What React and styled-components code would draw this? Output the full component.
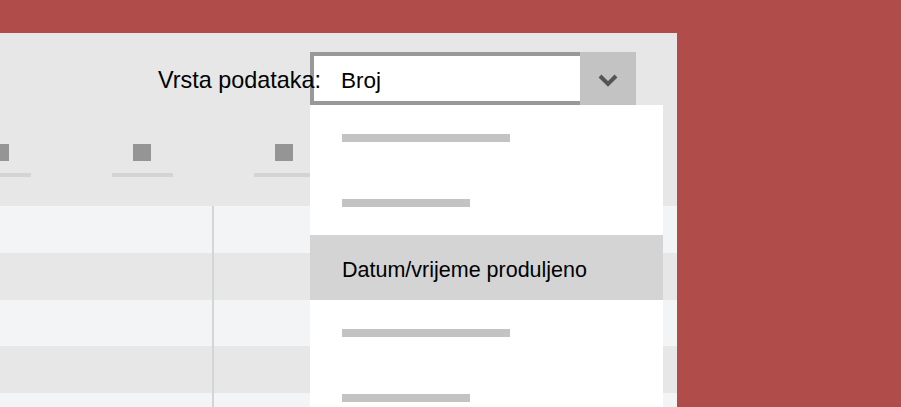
import { createGlobalStyle, styled } from "styled-components";

const GlobalStyle = createGlobalStyle`
  html, body {
    margin: 0;
    padding: 0;
    background: #b04d4b;
    overflow: hidden;
  }
  body {
    font-family: "Liberation Sans", Arial, sans-serif;
    color: #000;
  }
`;

const headerColumns = [0, 1, 2, 3, 4];
const rows = [
  { light: true, h: 47 },
  { light: false, h: 47 },
  { light: true, h: 46 },
  { light: false, h: 47 },
  { light: true, h: 47 },
];
const items = [
  { bar: 168 },
  { bar: 128 },
  { label: "Datum/vrijeme produljeno" },
  { bar: 168 },
  { bar: 128 },
];

const Chevron = () => (
  <svg width="22" height="14" viewBox="0 0 22 14">
    <path
      d="M3 3 L11 11 L19 3"
      fill="none"
      stroke="#555"
      strokeWidth="4"
      strokeLinecap="butt"
      strokeLinejoin="miter"
    />
  </svg>
);

const App = () => {
  return (
    <>
      <GlobalStyle />
      <Frame>
        <Panel>
          <Header>
            <TopRow>
              <Label>Vrsta podataka:</Label>
              <Combo>
                <ComboValue>Broj</ComboValue>
                <ComboButton>
                  <Chevron />
                </ComboButton>
              </Combo>
            </TopRow>
            <ColumnHeads>
              {headerColumns.map((c) => (
                <ColumnHead key={c}>
                  <HeadSquare />
                  <HeadLine />
                </ColumnHead>
              ))}
            </ColumnHeads>
          </Header>
          <Table>
            {rows.map((r, i) => (
              <Row key={i} $light={r.light} $h={r.h}>
                <Cell />
                <Cell $divider />
              </Row>
            ))}
          </Table>
          <DropList>
            {items.map((it, i) => (
              <Item key={i} $active={!!it.label}>
                {it.label ? <ItemText>{it.label}</ItemText> : <Bar $w={it.bar} />}
              </Item>
            ))}
          </DropList>
        </Panel>
      </Frame>
    </>
  );
};

export default App;

const Frame = styled.div`
  width: 901px;
  height: 407px;
  padding-top: 33px;
  box-sizing: border-box;
  overflow: hidden;
`;

const Panel = styled.div`
  position: relative;
  width: 677px;
  height: 374px;
  background: #e6e7e6;
  overflow: hidden;
`;

const Header = styled.div`
  height: 173px;
  box-sizing: border-box;
  padding-top: 19px;
  display: flex;
  flex-direction: column;
`;

const TopRow = styled.div`
  display: flex;
  align-items: center;
  justify-content: flex-end;
  padding-right: 41px;
  height: 53px;
`;

const Label = styled.span`
  position: relative;
  z-index: 1;
  font-size: 23.4px;
  margin-right: -11px;
  margin-top: 3px;
  white-space: nowrap;
`;

const Combo = styled.div`
  display: flex;
  height: 53px;
  width: 326px;
`;

const ComboValue = styled.div`
  flex: 1;
  background: #fff;
  border: 4px solid #999;
  border-right: 0;
  padding-left: 27px;
  display: flex;
  align-items: center;
  font-size: 22.5px;
  padding-top: 4px;
  box-sizing: border-box;
`;

const ComboButton = styled.div`
  width: 56px;
  background: #c3c3c3;
  display: flex;
  align-items: center;
  justify-content: center;
  padding-top: 2px;
  box-sizing: border-box;
`;

const ColumnHeads = styled.div`
  display: flex;
  margin-top: 39px;
  margin-left: -71px;
`;

const ColumnHead = styled.div`
  width: 142px;
  display: flex;
  flex-direction: column;
  align-items: center;
  gap: 12px;
`;

const HeadSquare = styled.div`
  width: 18px;
  height: 17px;
  background: #959595;
`;

const HeadLine = styled.div`
  width: 61px;
  height: 4px;
  background: #d4d4d4;
`;

const Table = styled.div`
  display: flex;
  flex-direction: column;
`;

const Row = styled.div`
  display: grid;
  grid-template-columns: 212px 1fr;
  height: ${(p) => p.$h}px;
  background: ${(p) => (p.$light ? "#f3f4f5" : "#e6e7e6")};
`;

const Cell = styled.div`
  border-left: ${(p) => (p.$divider ? "2px solid #d4d5d5" : "0")};
`;

const DropList = styled.div`
  position: absolute;
  left: 310px;
  top: 72px;
  width: 353px;
  background: #fff;
  display: flex;
  flex-direction: column;
  z-index: 2;
`;

const Item = styled.div`
  height: 65px;
  display: flex;
  align-items: center;
  padding-left: 32px;
  background: ${(p) => (p.$active ? "#d3d4d3" : "#fff")};
`;

const Bar = styled.div`
  width: ${(p) => p.$w}px;
  height: 8px;
  background: #c3c3c3;
`;

const ItemText = styled.span`
  font-size: 21.5px;
  margin-top: 6px;
  white-space: nowrap;
`;
